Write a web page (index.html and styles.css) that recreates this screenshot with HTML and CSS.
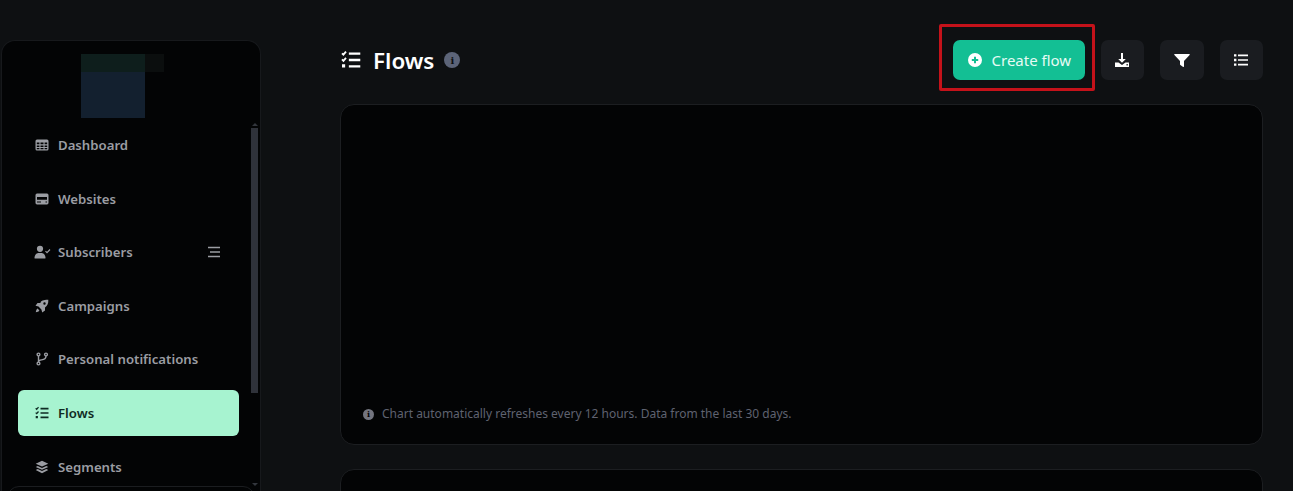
FILE: index.html
```html
<!DOCTYPE html>
<html>
<head>
    <title>Flows</title>
    <link rel="stylesheet" href="styles.css">
</head>
<body>
<div class="app">

    <!-- Sidebar -->
    <aside class="sidebar">
        <div class="logo">
            <div class="logoMark"></div>
            <div class="logoTail"></div>
        </div>

        <nav class="menu">
            <a class="menuItem">
                <svg class="menuIcon" viewBox="0 0 14 14"><path fill="currentColor" fill-rule="evenodd" d="M2 1.500h10a1.500 1.500 0 0 1 1.500 1.500v8a1.500 1.500 0 0 1-1.500 1.500H2A1.500 1.500 0 0 1 .5 11V3A1.500 1.500 0 0 1 2 1.500zM1.800 4.600v1.700h2.600V4.600zm3.700 0v1.700h3V4.600zm4.100 0v1.700h2.600V4.600zM1.800 7.400v1.700h2.600V7.400zm3.700 0v1.700h3V7.400zm4.100 0v1.700h2.600V7.400zM1.800 10.100v1.200h2.600v-1.200zm3.700 0v1.200h3v-1.200zm4.100 0v1.200h2.600v-1.200z"/></svg>
                <span>Dashboard</span>
            </a>
            <a class="menuItem">
                <svg class="menuIcon" viewBox="0 0 14 14"><path fill="currentColor" fill-rule="evenodd" d="M2 1.500h10A1.600 1.600 0 0 1 13.500 3v8a1.600 1.600 0 0 1-1.500 1.500H2A1.600 1.600 0 0 1 .5 11V3A1.600 1.600 0 0 1 2 1.500zM2 5v2.800h10V5zm0 4.500v1h4v-1zm8.500 0v1H12v-1z"/></svg>
                <span>Websites</span>
            </a>
            <a class="menuItem">
                <svg class="menuIcon wide" viewBox="0 0 17 14"><circle cx="6" cy="3.800" r="3.100" fill="currentColor"/><path fill="currentColor" d="M.5 13c0-3.200 2-5 4-5h3c2 0 4 1.800 4 5 0 .4-.3.600-.6.600H1.100c-.3 0-.6-.2-.6-.6z"/><path fill="none" stroke="currentColor" stroke-width="1.200" d="M11.500 6.200l1.500 1.500 3-3.200"/></svg>
                <span>Subscribers</span>
                <svg class="menuToggle" viewBox="0 0 14 12"><path fill="none" stroke="currentColor" stroke-width="1.300" d="M1 1.500h12M3 6h10M1 10.500h12"/></svg>
            </a>
            <a class="menuItem">
                <svg class="menuIcon" viewBox="0 0 14 14"><path fill="currentColor" fill-rule="evenodd" d="M13.300.7c.2 3.400-.8 6-3.300 7.800v3l-2.800 2-.8-3-2.900-2.900-3-.8 2-2.800h3C5.300 1.500 9.900.5 13.300.7zM9.500 3.300a1.200 1.200 0 1 0 0 2.400 1.200 1.200 0 0 0 0-2.400z"/><path fill="currentColor" d="M2.600 9.600l1.800 1.800c-.6 1-2 1.600-3.600 1.800.2-1.600.8-3 1.800-3.600z"/></svg>
                <span>Campaigns</span>
            </a>
            <a class="menuItem">
                <svg class="menuIcon" viewBox="0 0 14 14"><g fill="none" stroke="currentColor" stroke-width="1.400"><circle cx="3.500" cy="2.500" r="1.400"/><circle cx="3.500" cy="11.500" r="1.400"/><circle cx="11" cy="2.500" r="1.400"/><path d="M3.500 4v6M11 4c0 3-2 3.600-4.500 3.900-1.700.2-3 .8-3 2.100"/></g></svg>
                <span>Personal notifications</span>
            </a>
            <a class="menuItem active">
                <svg class="menuIcon" viewBox="0 0 14 14"><use href="#tasks"/></svg>
                <span>Flows</span>
            </a>
            <a class="menuItem">
                <svg class="menuIcon" viewBox="0 0 14 14"><path fill="currentColor" d="M7 .8l6.300 2.900L7 6.600.7 3.700zM2.700 5.900L7 7.900l4.300-2 2 1L7 9.800.7 6.900zm0 3.200L7 11.100l4.300-2 2 1L7 13.200.7 10.100z"/></svg>
                <span>Segments</span>
            </a>
        </nav>

        <!-- Scrollbar -->
        <div class="scrollbar">
            <div class="scrollUp"></div>
            <div class="scrollThumb"></div>
            <div class="scrollDown"></div>
        </div>

        <div class="sidebarFooter"></div>
    </aside>

    <!-- Main -->
    <main class="content">
        <header class="pageHeader">
            <div class="pageTitle">
                <svg class="titleIcon" viewBox="0 0 14 14"><use href="#tasks"/></svg>
                <h1>Flows</h1>
                <span class="infoDot">i</span>
            </div>

            <div class="actions">
                <div class="highlighted">
                    <button class="createBtn">
                        <svg class="plusIcon" viewBox="0 0 14 14"><path fill="currentColor" fill-rule="evenodd" d="M7 0a7 7 0 1 1 0 14A7 7 0 0 1 7 0zM6 3.800v2.200H3.800v2H6v2.200h2V8h2.200V6H8V3.800z"/></svg>
                        Create flow
                    </button>
                </div>
                <button class="iconBtn">
                    <svg viewBox="0 0 16 16"><path fill="#fff" d="M7 1h2v6h2.800L8 10.800 4.200 7H7z"/><path fill="#fff" fill-rule="evenodd" d="M1 10.500h3.500L8 13l3.500-2.500H15V15H1zM12.500 12v1.400h1.300V12z"/></svg>
                </button>
                <button class="iconBtn">
                    <svg viewBox="0 0 16 16"><path fill="#fff" d="M.8 2h14.400c.5 0 .7.600.4 1L10 9v5.500c0 .4-.5.700-.8.400L6.400 13c-.2-.2-.4-.4-.4-.7V9L.4 3C.1 2.600.3 2 .8 2z"/></svg>
                </button>
                <button class="iconBtn">
                    <svg viewBox="0 0 16 16"><path fill="#fff" d="M1 2.200h2.400v2.400H1zM1 6.800h2.400v2.400H1zM1 11.400h2.400v2.400H1zM5 2.600h10v1.600H5zM5 7.200h10v1.600H5zM5 11.800h10v1.600H5z"/></svg>
                </button>
            </div>
        </header>

        <section class="card chartCard">
            <p class="chartNote">
                <span class="noteDot">i</span>
                Chart automatically refreshes every 12 hours. Data from the last 30 days.
            </p>
        </section>

        <section class="card"></section>
    </main>
</div>

<!-- Shared icon -->
<svg class="defs" width="0" height="0">
    <symbol id="tasks" viewBox="0 0 14 14">
        <path fill="currentColor" d="M5.500 1.800h8v1.600h-8zM5.500 6.200h8v1.600h-8zM5.500 10.600h8v1.600h-8zM.7 10h2.200v2.200H.7z"/>
        <path fill="none" stroke="currentColor" stroke-width="1.300" d="M.7 2.300l1 1 1.800-2.100M.7 6.600l1 1 1.800-2.100"/>
    </symbol>
</svg>
</body>
</html>
```

FILE: styles.css
```css
html, body {
    margin: 0;
    height: 491px;
    overflow: hidden;
}

body {
    background-color: #0e1012;
    color: #fff;
    font-family: "Noto Sans", "Liberation Sans", sans-serif;
}

.defs {
    display: block;
}

.app {
    display: flex;
    height: 491px;
    overflow: hidden;
    align-items: flex-start;
}

/* Sidebar */
.sidebar {
    position: relative;
    flex: none;
    box-sizing: border-box;
    width: 260px;
    height: 451px;
    margin: 40px 0 0 1px;
    padding-top: 13px;
    overflow: hidden;
    background-color: #030405;
    border: 1px solid #17191c;
    border-bottom: 0;
    border-radius: 14px 14px 0 0;
}

.logo {
    display: flex;
    align-items: flex-start;
    height: 64px;
    margin-left: 79px;
}

.logoMark {
    width: 64px;
    height: 64px;
    background: linear-gradient(#0e1e1c 0, #0e1e1c 18px, #13202f 18px);
}

.logoTail {
    width: 19px;
    height: 18px;
    background-color: #0b0e0e;
}

.menu {
    display: flex;
    flex-direction: column;
    gap: 7.6px;
    margin: 4px 0 0 16px;
    width: 221px;
}

.menuItem {
    display: flex;
    align-items: center;
    height: 46px;
    padding-left: 16px;
    border-radius: 6px;
    color: #9b9da3;
    font-size: 13.2px;
    font-weight: 600;
}

.menuItem.active {
    background-color: #a7f3d0;
    color: #0f2b23;
}

.menuIcon {
    flex: none;
    width: 14px;
    height: 14px;
    margin: 0 9px 0 1px;
}

.menuIcon.wide {
    width: 17px;
    margin: 0 7px 0 0;
}

.menuToggle {
    flex: none;
    width: 14px;
    height: 12px;
    margin-left: auto;
    margin-right: 18px;
}

.scrollbar {
    position: absolute;
    top: 80px;
    right: 2px;
    display: flex;
    flex-direction: column;
    align-items: center;
    width: 7px;
    height: 365px;
}

.scrollThumb {
    width: 7px;
    height: 265px;
    margin-top: 2px;
    background-color: #2f323a;
}

.scrollUp, .scrollDown {
    width: 0;
    height: 0;
    border-left: 3px solid transparent;
    border-right: 3px solid transparent;
}

.scrollUp {
    margin-top: 2px;
    border-bottom: 3px solid #33363d;
}

.scrollDown {
    margin-top: auto;
    border-top: 3px solid #33363d;
}

.sidebarFooter {
    position: absolute;
    top: 445px;
    left: 5px;
    right: 5px;
    height: 60px;
    background-color: #030405;
    border: 1px solid #1b1d20;
    border-radius: 12px;
}

/* Main */
.content {
    flex: none;
    box-sizing: border-box;
    width: 923px;
    height: 491px;
    margin-left: 79px;
    padding-top: 40px;
    overflow: hidden;
}

.pageHeader {
    display: flex;
    align-items: center;
    justify-content: space-between;
    height: 40px;
    margin-bottom: 24px;
}

.pageTitle {
    display: flex;
    align-items: center;
}

.pageTitle h1 {
    margin: 2px 10px 0 0;
    font-size: 22.4px;
    font-weight: 600;
    line-height: 38px;
}

.titleIcon {
    width: 20px;
    height: 20px;
    margin: 0 12px 0 1px;
}

.infoDot, .noteDot {
    display: flex;
    align-items: center;
    justify-content: center;
    border-radius: 50%;
    font-family: "DejaVu Serif", serif;
    font-weight: 700;
}

.infoDot {
    width: 16px;
    height: 16px;
    background-color: #5c6478;
    color: #0e1012;
    font-size: 10px;
}

.actions {
    display: flex;
    align-items: center;
    gap: 16px;
}

.highlighted {
    position: relative;
}

/* Red box around the button */
.highlighted::after {
    content: "";
    position: absolute;
    top: -16px;
    left: -14px;
    right: -10px;
    bottom: -11px;
    border: 3px solid #c4121a;
    border-radius: 2px;
}

.createBtn {
    display: flex;
    align-items: center;
    width: 132px;
    height: 40px;
    padding: 0 0 0 15px;
    border: 0;
    border-radius: 7px;
    background-color: #13bf94;
    color: #e6fbf4;
    font-family: inherit;
    font-size: 15px;
}

.plusIcon {
    width: 14px;
    height: 14px;
    margin-right: 10px;
    color: #fff;
}

.iconBtn {
    display: flex;
    align-items: center;
    justify-content: center;
    width: 43.5px;
    height: 40px;
    padding: 0;
    border: 0;
    border-radius: 7px;
    background-color: #1a1c20;
}

.iconBtn svg {
    width: 16px;
    height: 16px;
}

.card {
    box-sizing: border-box;
    height: 341px;
    margin-bottom: 24px;
    background-color: #030405;
    border: 1px solid #1c1e21;
    border-radius: 14px;
}

.chartCard {
    display: flex;
    align-items: flex-end;
    padding: 0 0 21px 22px;
}

.chartNote {
    display: flex;
    align-items: center;
    gap: 8px;
    margin: 0;
    color: #5f6270;
    font-size: 12px;
    line-height: 18px;
}

.noteDot {
    width: 11px;
    height: 11px;
    background-color: #73757f;
    color: #030405;
    font-size: 8px;
}
```
